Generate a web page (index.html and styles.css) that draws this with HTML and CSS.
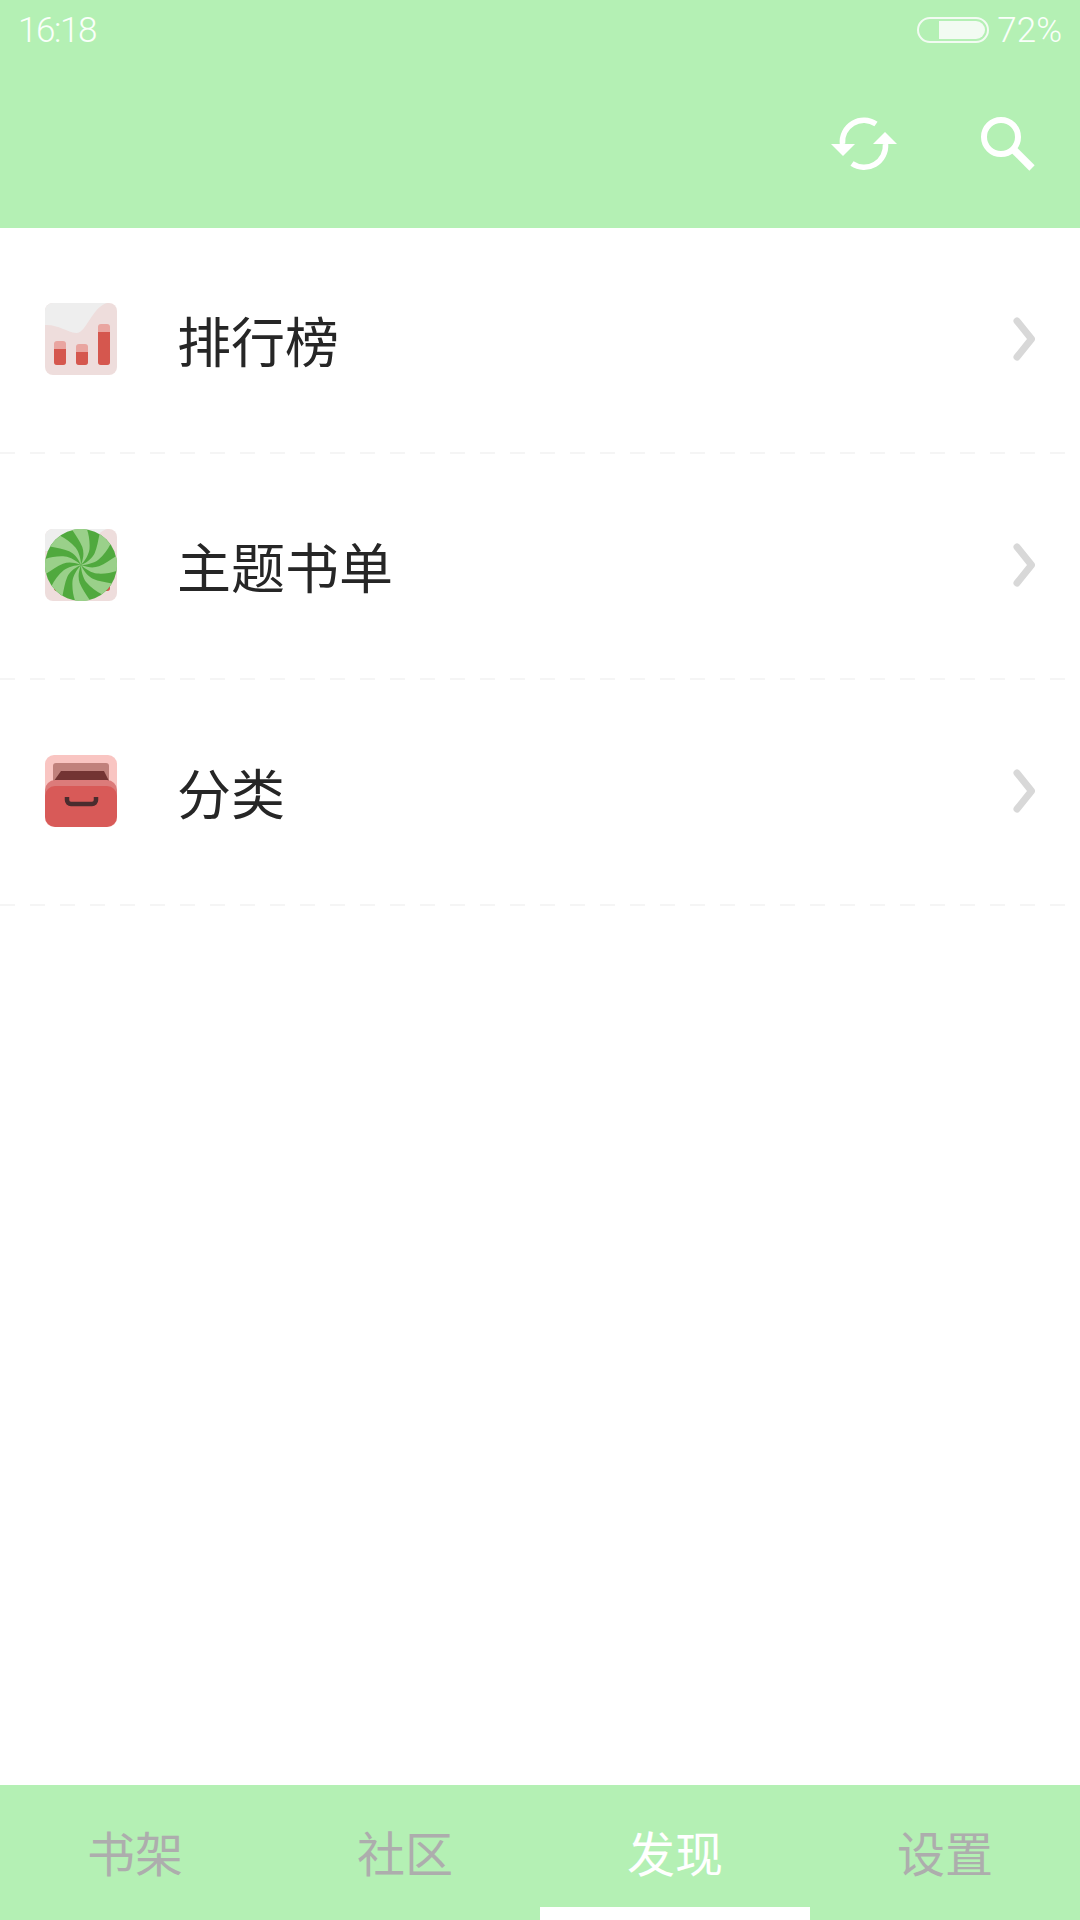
FILE: index.html
```html
<!DOCTYPE html>
<html lang="zh">
<head>
<meta charset="utf-8">
<title>发现</title>
<link rel="stylesheet" href="styles.css">
</head>
<body>
<svg class="defs" width="0" height="0" aria-hidden="true">
  <defs>
    <symbol id="chart" viewBox="0 0 72 72">
      <rect width="72" height="72" rx="8" fill="#eedddc"/>
      <path d="M0 22C12 21 22 29 31 30C41 31 47 4 62 0H8A8 8 0 0 0 0 8Z" fill="#eeeeee"/>
      <rect x="9" y="38" width="12" height="24" rx="3" fill="#e9a5a0"/>
      <path d="M9 46H21V59a3 3 0 0 1-3 3H12a3 3 0 0 1-3-3Z" fill="#d5574e"/>
      <rect x="31" y="41" width="12" height="21" rx="3" fill="#e9a5a0"/>
      <path d="M31 49H43V59a3 3 0 0 1-3 3H34a3 3 0 0 1-3-3Z" fill="#d5574e"/>
      <rect x="53" y="21" width="12" height="41" rx="3" fill="#e9a5a0"/>
      <path d="M53 29H65V59a3 3 0 0 1-3 3H56a3 3 0 0 1-3-3Z" fill="#d5574e"/>
    </symbol>
    <path id="blade" d="M0 0C4-4 8-11 8.500-16C9-23 8-30 6-35.500A36 36 0 0 0-8.700-35C-5-29-1-24 1.300-18C2.900-13 3-8 0 0Z" fill="#9ad08a"/>
  </defs>
</svg>
<div class="app">
  <header class="header">
    <div class="status">
      <span class="time">16:18</span>
      <div class="status-right">
        <div class="battery"><div class="battery-fill"></div></div>
        <span>72%</span>
      </div>
    </div>
    <div class="toolbar">
      <svg class="tool" viewBox="0 0 72 72">
        <path d="M48 16A21.500 21.500 0 0 0 14.500 36" fill="none" stroke="#fff" stroke-width="5.500"/>
        <path d="M24 55.500A21.500 21.500 0 0 0 57.500 36" fill="none" stroke="#fff" stroke-width="5.500"/>
        <path d="M3 36H27L15 48Z" fill="#fff"/>
        <path d="M45 36H69L57 24Z" fill="#fff"/>
      </svg>
      <svg class="tool" viewBox="0 0 72 72">
        <circle cx="29" cy="29" r="17" fill="none" stroke="#fff" stroke-width="6"/>
        <path d="M42.500 42.500L60 60" fill="none" stroke="#fff" stroke-width="7.500"/>
      </svg>
    </div>
  </header>
  <main class="list">
    <div class="row">
      <svg class="row-icon" viewBox="0 0 72 72"><use href="#chart" width="72" height="72"/></svg>
      <span class="row-label">排行榜</span>
      <svg class="chevron" viewBox="0 0 22 44"><path d="M4 4L18.500 22L4 40"/></svg>
    </div>
    <div class="row">
      <svg class="row-icon" viewBox="0 0 72 72">
        <use href="#chart" width="72" height="72"/>
        <circle cx="36" cy="36" r="36" fill="#50a93e"/>
        <g transform="translate(36 36)">
          <use href="#blade"/>
          <use href="#blade" transform="rotate(45)"/>
          <use href="#blade" transform="rotate(90)"/>
          <use href="#blade" transform="rotate(135)"/>
          <use href="#blade" transform="rotate(180)"/>
          <use href="#blade" transform="rotate(225)"/>
          <use href="#blade" transform="rotate(270)"/>
          <use href="#blade" transform="rotate(315)"/>
        </g>
      </svg>
      <span class="row-label">主题书单</span>
      <svg class="chevron" viewBox="0 0 22 44"><path d="M4 4L18.500 22L4 40"/></svg>
    </div>
    <div class="row">
      <svg class="row-icon" viewBox="0 0 72 72">
        <rect width="72" height="72" rx="9" fill="#f9c5c2"/>
        <rect x="8" y="8" width="56" height="40" rx="3" fill="#c0817c"/>
        <path d="M16 16H59L66 30H6Z" fill="#733433"/>
        <path d="M0 35A10 10 0 0 1 10 25H62A10 10 0 0 1 72 35V50H0Z" fill="#dc7b7a"/>
        <path d="M0 41A10 10 0 0 1 10 31H62A10 10 0 0 1 72 41V62A10 10 0 0 1 62 72H10A10 10 0 0 1 0 62Z" fill="#d85a58"/>
        <path d="M22 42V45A4 4 0 0 0 26 49H47A4 4 0 0 0 51 45V42" fill="none" stroke="#4a2c2e" stroke-width="4.500"/>
      </svg>
      <span class="row-label">分类</span>
      <svg class="chevron" viewBox="0 0 22 44"><path d="M4 4L18.500 22L4 40"/></svg>
    </div>
  </main>
  <nav class="tabs">
    <div class="tab">书架</div>
    <div class="tab">社区</div>
    <div class="tab tab-active">发现</div>
    <div class="tab">设置</div>
  </nav>
</div>
</body>
</html>
```
FILE: styles.css
```css
* { box-sizing: border-box; }
html, body { margin: 0; padding: 0; background: #fff; }
body { font-family: "Noto Sans CJK SC", "Noto Sans", sans-serif; }
.defs { display: block; height: 0; }
.app { width: 1080px; height: 1920px; display: flex; flex-direction: column; overflow: hidden; }
.header { height: 228px; background: #b4f0b4; display: flex; flex-direction: column; flex: none; }
.status { height: 60px; padding: 2px 18px 0 18px; display: flex; align-items: center; justify-content: space-between;
  font-family: Roboto, sans-serif; font-weight: 300; font-size: 35px; color: #fafffa; line-height: 58px; }
.time { letter-spacing: -1.4px; }
.status-right { display: flex; align-items: center; gap: 8px; }
.battery { width: 72px; height: 26px; margin-bottom: 2px; border: 2px solid #f2fbf2; border-radius: 13px; padding: 2px; display: flex; justify-content: flex-end; }
.battery-fill { width: 46px; height: 18px; background: #f2fbf2; border-radius: 0 9px 9px 0; }
.toolbar { height: 168px; display: flex; justify-content: flex-end; align-items: center; }
.tool { width: 72px; height: 72px; margin: 0 36px; display: block; }
.list { flex: 1; }
.row { height: 226px; padding: 0 0 5px 45px; display: flex; align-items: center;
  background-image: linear-gradient(to right, #f5f5f5 15px, transparent 15px);
  background-size: 30px 2px; background-repeat: repeat-x; background-position: left bottom; }
.row-icon { width: 72px; height: 72px; flex: none; display: block; }
.row-label { margin: 3px 0 0 60px; font-size: 54px; color: #262626; line-height: 76px; }
.chevron { width: 22px; height: 44px; margin-left: auto; margin-right: 45px; flex: none; display: block; fill: none; stroke: #d8d8d8; stroke-width: 7; stroke-linecap: round; stroke-linejoin: round; }
.tabs { height: 135px; flex: none; background: #b4f0b4; display: grid; grid-template-columns: repeat(4, 1fr); }
.tab { position: relative; display: flex; align-items: center; justify-content: center; font-size: 48px; font-weight: 400; color: #adadad; padding-bottom: 4px; }
.tab-active { color: #fff; }
.tab-active::after { content: ""; position: absolute; left: 0; right: 0; bottom: 0; height: 13px; background: #fff; }
```
